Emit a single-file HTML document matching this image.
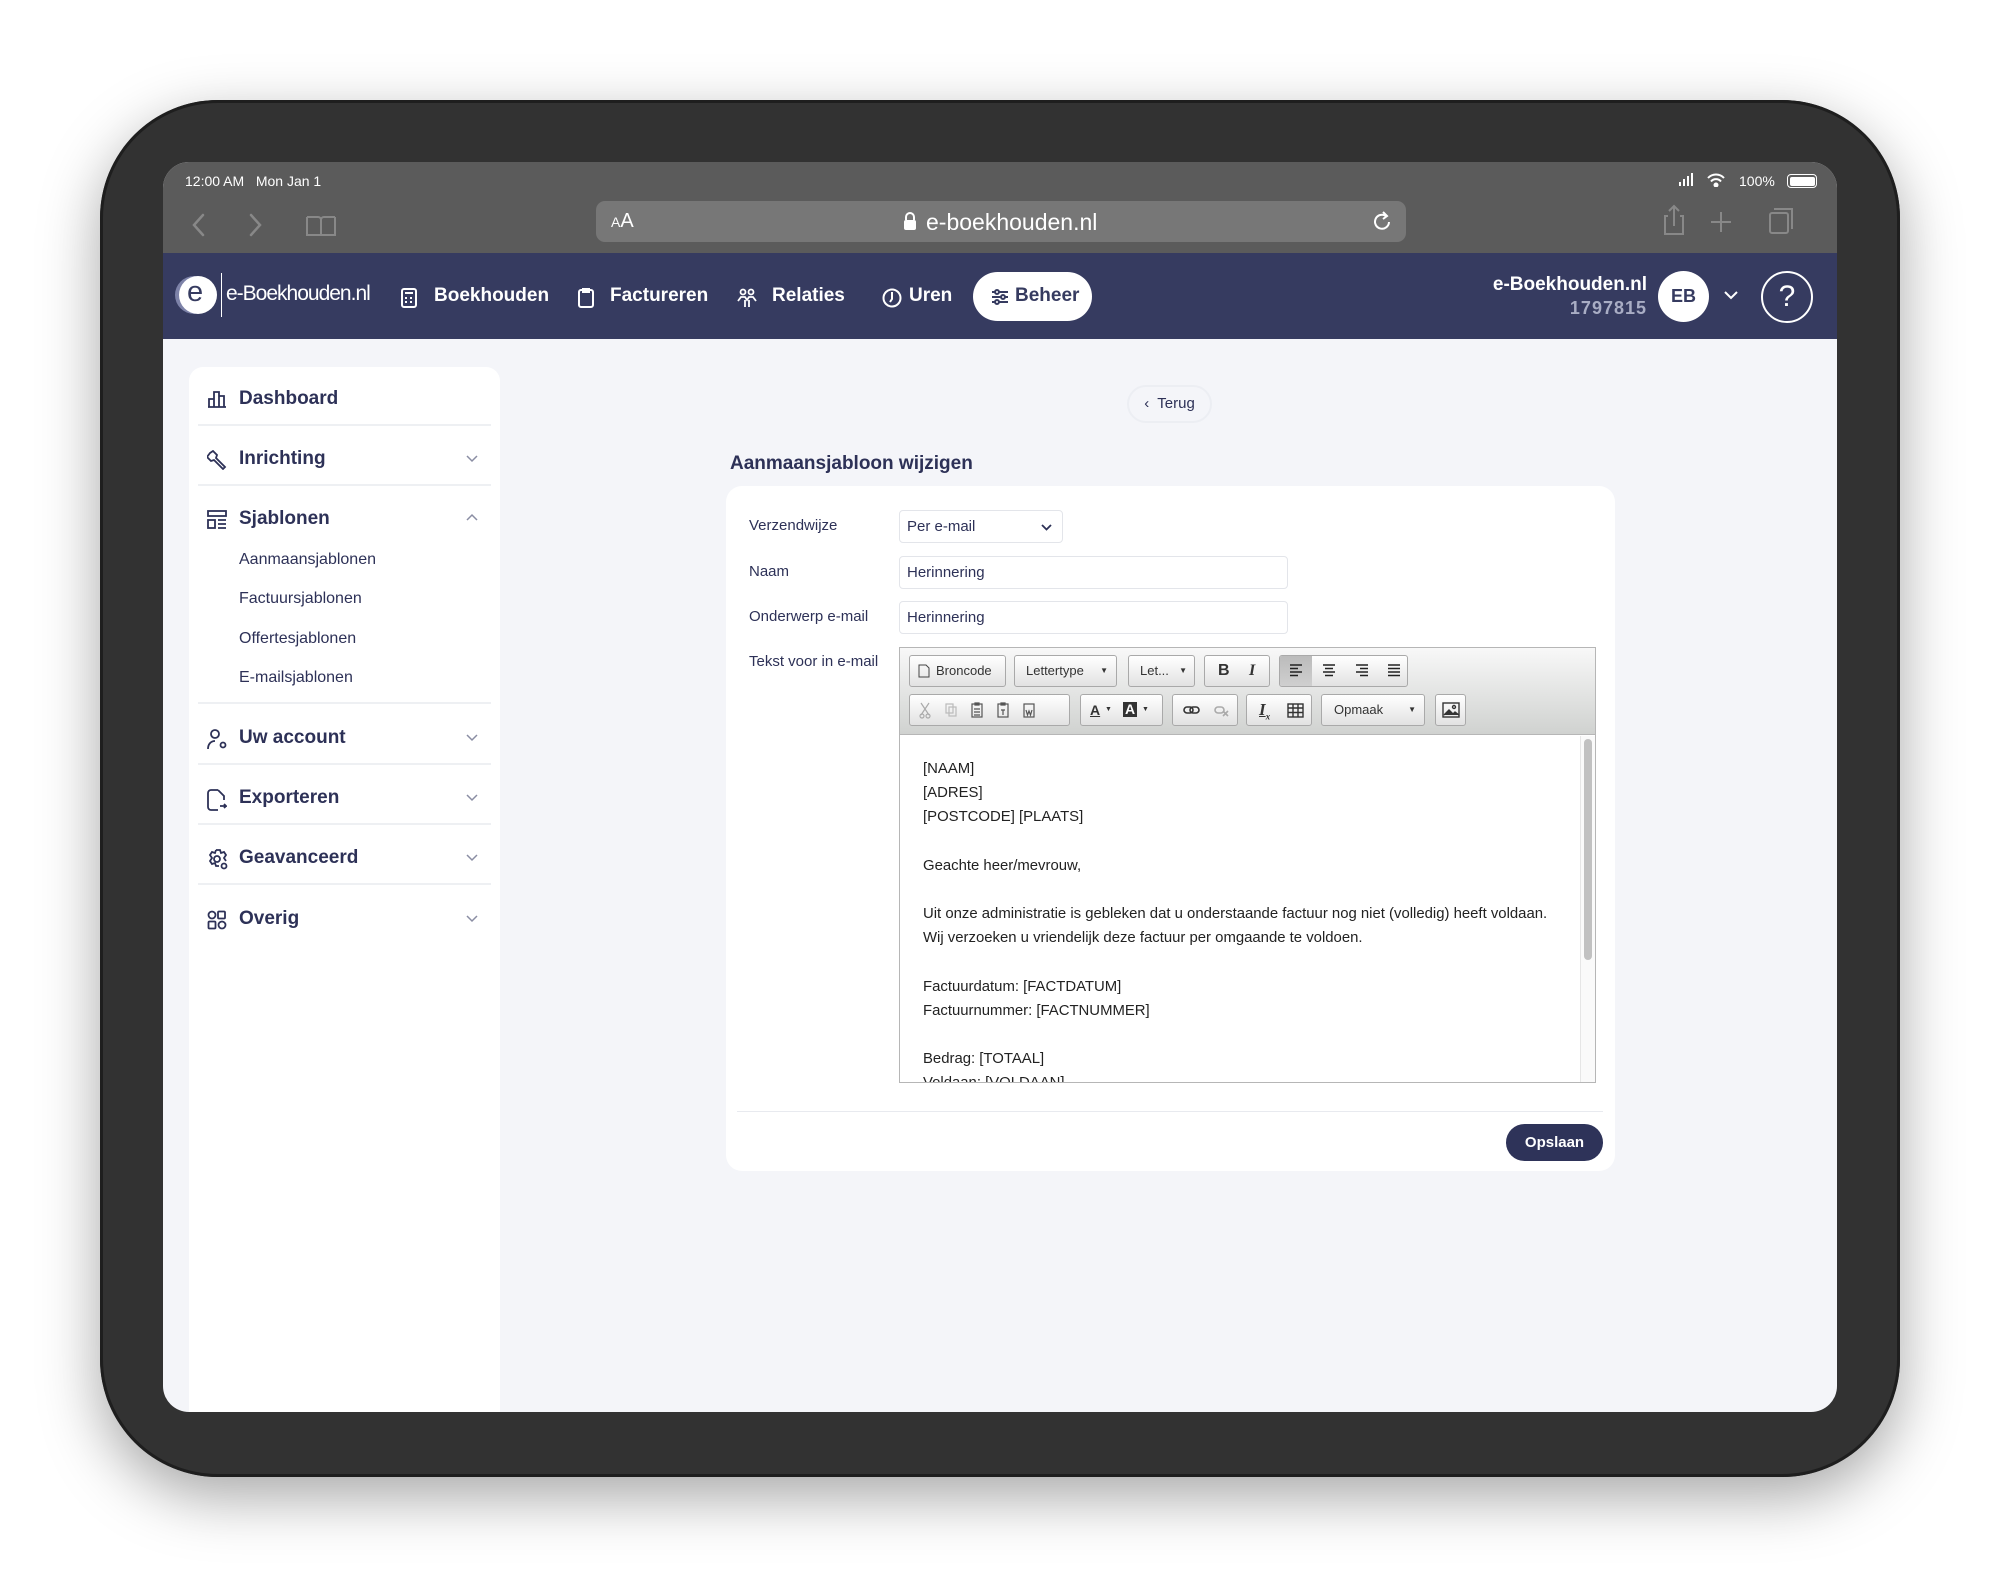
<!DOCTYPE html>
<html><head><meta charset="utf-8">
<style>
*{box-sizing:border-box;margin:0;padding:0}
body{width:2000px;height:1576px;background:#fff;position:relative;overflow:hidden;font-family:"Liberation Sans",sans-serif}
.abs{position:absolute}
#device{left:100px;top:100px;width:1800px;height:1377px;border-radius:118px;background:#323232;box-shadow:0 20px 60px rgba(0,0,0,.35),inset 0 0 0 3px #1e1e1e}
#screen{left:163px;top:162px;width:1674px;height:1250px;border-radius:26px;overflow:hidden;background:#f4f5f9}
#status{left:0;top:0;width:1674px;height:91px;background:#5b5b5b}
.st{color:#fff;font-size:14px}
#url{left:433px;top:39px;width:810px;height:41px;border-radius:9px;background:#777}
#nav{left:0;top:91px;width:1674px;height:86px;background:#363b60}
.nv{color:#fff;font-weight:bold;font-size:19px;top:32px}
#side{left:26px;top:205px;width:311px;height:1100px;background:#fff;border-radius:14px}
.si{left:50px;font-weight:bold;font-size:19px;color:#2d3157}
.sub{left:50px;font-size:16px;color:#2d3157}
.sep{left:9px;width:293px;height:2px;background:#eef0f3}
.ic{left:18px}
.chev{left:277px}
.lbl{font-size:15px;color:#2d3157;left:23px}
.inp{background:#fff;border:1px solid #e3e5ea;border-radius:4px;font-size:15px;color:#2d3157;padding-left:7px;line-height:31px}
.tb{position:absolute;height:32px;border:1px solid #a9a9a9;border-radius:3px;background:linear-gradient(#fff,#e2e2e2);font-size:13px;color:#333;line-height:30px}
.body p{font-size:14.9px;color:#222;height:24.2px;line-height:24.2px;white-space:nowrap}
</style></head><body>
<div id="device" class="abs"></div>
<div id="screen" class="abs">
  <div id="status" class="abs">
    <div class="abs st" style="left:22px;top:11px">12:00 AM&nbsp;&nbsp;&nbsp;Mon Jan 1</div>
    <svg class="abs" style="left:1515px;top:11px" width="16" height="14"><rect x="1" y="9" width="2" height="4" fill="#fff"/><rect x="5" y="6" width="2" height="7" fill="#fff"/><rect x="9" y="3" width="2" height="10" fill="#fff"/><rect x="13" y="0" width="2" height="13" fill="#fff"/></svg>
    <svg class="abs" style="left:1543px;top:11px" width="20" height="14" fill="none" stroke="#fff" stroke-width="2"><path d="M2 5a11 11 0 0 1 16 0M5 8.5a6.5 6.5 0 0 1 10 0"/><circle cx="10" cy="12" r="1.5" fill="#fff"/></svg>
    <div class="abs st" style="left:1576px;top:11px">100%</div>
    <div class="abs" style="left:1624px;top:12px;width:30px;height:14px;border:1.5px solid #fff;border-radius:4px;padding:1.5px"><div style="width:100%;height:100%;background:#fff;border-radius:2px"></div></div>
    <svg class="abs" style="left:20px;top:50px" width="120" height="26" fill="none" stroke="#888" stroke-width="2.5" stroke-linecap="round"><path d="M20 3l-9 10 9 10M68 3l9 10-9 10"/></svg>
    <svg class="abs" style="left:142px;top:52px" width="32" height="24" fill="none" stroke="#888" stroke-width="2"><path d="M2 3h11a3 3 0 0 1 3 3v16M30 3H19a3 3 0 0 0-3 3M2 3v18h14M30 3v18H16"/></svg>
    <div id="url" class="abs">
      <div class="abs" style="left:15px;top:9px;color:#fff;font-size:20px"><span style="font-size:14px">A</span>A</div>
      <svg class="abs" style="left:307px;top:10px" width="14" height="20"><path d="M3 9V6a4 4 0 0 1 8 0v3" fill="none" stroke="#fff" stroke-width="2"/><rect x="1" y="9" width="12" height="10" rx="2" fill="#fff"/></svg>
      <div class="abs" style="left:330px;top:8px;color:#fff;font-size:23px">e-boekhouden.nl</div>
      <svg class="abs" style="left:775px;top:9px" width="22" height="24" fill="none" stroke="#fff" stroke-width="2"><path d="M18 12a7 7 0 1 1-3-6"/><path d="M12 2l4 4-4 3"/></svg>
    </div>
    <svg class="abs" style="left:1500px;top:40px" width="160" height="36" fill="none" stroke="#888" stroke-width="2"><path d="M5 14H2v18h18V14h-3M11 24V4M6 9l5-5 5 5M58 10v20M48 20h20"/><rect x="107" y="11" width="18" height="20" rx="2"/><path d="M111 7h18v20"/></svg>
  </div>
  <div id="nav" class="abs">
    <div class="abs" style="left:16px;top:23px;width:38px;height:38px;border-radius:50%;background:#fff;box-shadow:-4px 0 0 #7d82a8"></div>
    <div class="abs" style="left:24px;top:23px;font-size:29px;color:#363b60">e</div>
    <div class="abs" style="left:58px;top:20px;width:1px;height:44px;background:#fff"></div>
    <div class="abs" style="left:63px;top:29px;color:#fff;font-size:21px;letter-spacing:-1px">e-Boekhouden.nl</div>
    <svg class="abs" style="left:238px;top:35px" width="16" height="20" fill="none" stroke="#fff" stroke-width="2"><rect x="1" y="1" width="14" height="18" rx="2"/><path d="M4 5h8M4 10h2M9 10h2M4 14h2M9 14h2"/></svg>
    <div class="abs nv" style="left:271px">Boekhouden</div>
    <svg class="abs" style="left:415px;top:34px" width="16" height="21" fill="none" stroke="#fff" stroke-width="2"><rect x="1" y="3" width="14" height="17" rx="2"/><path d="M5 2h6v3H5z"/></svg>
    <div class="abs nv" style="left:447px">Factureren</div>
    <svg class="abs" style="left:574px;top:35px" width="20" height="20" fill="none" stroke="#fff" stroke-width="1.8"><circle cx="6" cy="4" r="2.5"/><circle cx="14" cy="4" r="2.5"/><path d="M1 13l3-4h4l2 3 2-3h4l3 4M8 12v7M12 12v7"/></svg>
    <div class="abs nv" style="left:609px">Relaties</div>
    <svg class="abs" style="left:719px;top:35px" width="20" height="20" fill="none" stroke="#fff" stroke-width="2"><circle cx="10" cy="10" r="8.5"/><path d="M10 4v7l-2 3"/></svg>
    <div class="abs nv" style="left:746px">Uren</div>
    <div class="abs" style="left:810px;top:19px;width:119px;height:49px;border-radius:25px;background:#fff"></div>
    <svg class="abs" style="left:828px;top:35px" width="18" height="18" fill="none" stroke="#363b60" stroke-width="2"><path d="M1 4h16M1 9h16M1 14h16"/><circle cx="6" cy="4" r="2" fill="#fff"/><circle cx="12" cy="9" r="2" fill="#fff"/><circle cx="6" cy="14" r="2" fill="#fff"/></svg>
    <div class="abs nv" style="left:852px;color:#363b60">Beheer</div>
    <div class="abs" style="right:190px;top:21px;color:#fff;font-weight:bold;font-size:19px;text-align:right">e-Boekhouden.nl</div>
    <div class="abs" style="right:190px;top:45px;color:#a9adc4;font-weight:bold;font-size:18px;letter-spacing:1px">1797815</div>
    <div class="abs" style="left:1495px;top:18px;width:51px;height:51px;border-radius:50%;background:#fff;color:#363b60;font-weight:bold;font-size:18px;text-align:center;line-height:51px">EB</div>
    <svg class="abs" style="left:1561px;top:37px" width="14" height="10" fill="none" stroke="#fff" stroke-width="2"><path d="M1 2l6 6 6-6"/></svg>
    <div class="abs" style="left:1598px;top:18px;width:52px;height:52px;border-radius:50%;border:2px solid #fff;color:#fff;font-size:30px;text-align:center;line-height:48px">?</div>
  </div>
  <div id="side" class="abs">
    <svg class="abs ic" style="top:23px" width="20" height="18" fill="none" stroke="#2d3157" stroke-width="1.8"><path d="M1 17h18M2 17V9h5v8M7 17V2h5v15M12 17V6h5v11"/></svg>
    <div class="abs si" style="top:21px">Dashboard</div>
    <div class="abs sep" style="top:57px"></div>
    <svg class="abs ic" style="top:83px" width="20" height="20" fill="none" stroke="#2d3157" stroke-width="1.8"><path d="M3 3l3-2 4 4-1 3 9 9-2 2-9-9-3 1-4-4z"/></svg>
    <div class="abs si" style="top:81px">Inrichting</div>
    <svg class="abs chev" style="top:88px" width="12" height="8" fill="none" stroke="#8a8da3" stroke-width="1.5"><path d="M1 1l5 5 5-5"/></svg>
    <div class="abs sep" style="top:117px"></div>
    <svg class="abs ic" style="top:143px" width="20" height="20" fill="none" stroke="#2d3157" stroke-width="1.8"><rect x="1" y="1" width="18" height="5"/><rect x="1" y="10" width="7" height="8"/><path d="M11 10h8M11 14h8M11 18h8"/></svg>
    <div class="abs si" style="top:141px">Sjablonen</div>
    <svg class="abs chev" style="top:146px" width="12" height="8" fill="none" stroke="#8a8da3" stroke-width="1.5"><path d="M1 7l5-5 5 5"/></svg>
    <div class="abs sub" style="top:184px">Aanmaansjablonen</div>
    <div class="abs sub" style="top:223px">Factuursjablonen</div>
    <div class="abs sub" style="top:263px">Offertesjablonen</div>
    <div class="abs sub" style="top:302px">E-mailsjablonen</div>
    <div class="abs sep" style="top:335px"></div>
    <svg class="abs ic" style="top:362px" width="22" height="22" fill="none" stroke="#2d3157" stroke-width="1.8"><circle cx="8" cy="5" r="4"/><path d="M1 20c0-5 3-8 7-8"/><circle cx="16" cy="16" r="2.5"/></svg>
    <div class="abs si" style="top:360px">Uw account</div>
    <svg class="abs chev" style="top:367px" width="12" height="8" fill="none" stroke="#8a8da3" stroke-width="1.5"><path d="M1 1l5 5 5-5"/></svg>
    <div class="abs sep" style="top:396px"></div>
    <svg class="abs ic" style="top:422px" width="20" height="22" fill="none" stroke="#2d3157" stroke-width="1.8"><path d="M11 1H4a3 3 0 0 0-3 3v14a3 3 0 0 0 3 3h7M11 1l6 6v4M13 17h6l-2-2M19 17l-2 2"/></svg>
    <div class="abs si" style="top:420px">Exporteren</div>
    <svg class="abs chev" style="top:427px" width="12" height="8" fill="none" stroke="#8a8da3" stroke-width="1.5"><path d="M1 1l5 5 5-5"/></svg>
    <div class="abs sep" style="top:456px"></div>
    <svg class="abs ic" style="top:482px" width="22" height="22" fill="none" stroke="#2d3157" stroke-width="1.8"><path d="M9 1h4l1 3 3-1 2 3-2 3 2 3M9 1L8 4 5 3 3 6l2 3-2 3 2 3 3-1 1 3h3"/><circle cx="10" cy="10" r="3"/><circle cx="17" cy="17" r="2.5"/></svg>
    <div class="abs si" style="top:480px">Geavanceerd</div>
    <svg class="abs chev" style="top:487px" width="12" height="8" fill="none" stroke="#8a8da3" stroke-width="1.5"><path d="M1 1l5 5 5-5"/></svg>
    <div class="abs sep" style="top:516px"></div>
    <svg class="abs ic" style="top:543px" width="20" height="20" fill="none" stroke="#2d3157" stroke-width="1.8"><circle cx="5" cy="5" r="3.5"/><rect x="11" y="1.5" width="7" height="7" rx="1"/><rect x="1.5" y="11.5" width="7" height="7" rx="1"/><circle cx="15" cy="15" r="3.5"/></svg>
    <div class="abs si" style="top:541px">Overig</div>
    <svg class="abs chev" style="top:548px" width="12" height="8" fill="none" stroke="#8a8da3" stroke-width="1.5"><path d="M1 1l5 5 5-5"/></svg>
  </div>
  <div class="abs" style="left:964px;top:223px;width:85px;height:38px;border-radius:19px;border:2px solid #eceef3;color:#2d3157;font-size:15px;line-height:34px;text-align:center">‹&nbsp; Terug</div>
  <div class="abs" style="left:567px;top:291px;color:#2d3157;font-weight:bold;font-size:19px">Aanmaansjabloon wijzigen</div>
  <div class="abs" style="left:563px;top:324px;width:889px;height:685px;background:#fff;border-radius:16px">
    <div class="abs lbl" style="top:31px">Verzendwijze</div>
    <div class="abs lbl" style="top:77px">Naam</div>
    <div class="abs lbl" style="top:122px">Onderwerp e-mail</div>
    <div class="abs lbl" style="top:167px">Tekst voor in e-mail</div>
    <div class="abs inp" style="left:173px;top:24px;width:164px;height:33px">Per e-mail<svg style="position:absolute;right:10px;top:13px" width="11" height="8" fill="none" stroke="#2d3157" stroke-width="1.8"><path d="M1 1l4.5 4.5L10 1"/></svg></div>
    <div class="abs inp" style="left:173px;top:70px;width:389px;height:33px">Herinnering</div>
    <div class="abs inp" style="left:173px;top:115px;width:389px;height:33px">Herinnering</div>
    <div class="abs" style="left:173px;top:161px;width:697px;height:436px;border:1px solid #b6b6b6;background:#fff">
      <div class="abs" style="left:0;top:0;width:695px;height:87px;background:linear-gradient(#f8f8f8,#d0d2d0);border-bottom:1px solid #b6b6b6"></div>
      <div class="tb" style="left:9px;top:7px;width:97px;padding-left:26px">Broncode<svg style="position:absolute;left:8px;top:8px" width="12" height="14" fill="none" stroke="#444"><path d="M1 1h7l3 3v9H1z"/></svg></div>
      <div class="tb" style="left:114px;top:7px;width:103px;padding-left:11px">Lettertype<span style="position:absolute;right:8px;font-size:8px">▼</span></div>
      <div class="tb" style="left:228px;top:7px;width:67px;padding-left:11px">Let...<span style="position:absolute;right:7px;font-size:8px">▼</span></div>
      <div class="tb" style="left:304px;top:7px;width:66px;font-size:16px"><b style="position:absolute;left:13px">B</b><i style="position:absolute;left:44px;font-family:'Liberation Serif';font-weight:bold">I</i></div>
      <div class="tb" style="left:379px;top:7px;width:129px;overflow:hidden"><div style="position:absolute;left:0;top:0;width:32px;height:30px;background:linear-gradient(#bbb,#cfcfcf)"></div>
        <svg style="position:absolute;left:9px;top:8px" width="115" height="14" stroke="#222" stroke-width="1.5"><path d="M1 1h12M1 4.5h8M1 8h12M1 11.5h8M34 1h12M36 4.5h8M34 8h12M36 11.5h8M67 1h12M71 4.5h8M67 8h12M71 11.5h8M99 1h12M99 4.5h12M99 8h12M99 11.5h12"/></svg></div>
      <div class="tb" style="left:9px;top:46px;width:161px"><svg style="position:absolute;left:8px;top:6px" width="140" height="18" fill="none" stroke="#555" stroke-width="1.2"><path d="M3 2l8 12M11 2L3 14" stroke="#aaa"/><circle cx="4" cy="15" r="2" stroke="#aaa"/><circle cx="10" cy="15" r="2" stroke="#aaa"/><rect x="28" y="3" width="7" height="9" stroke="#bbb"/><rect x="31" y="6" width="7" height="9" stroke="#bbb"/><rect x="54" y="3" width="10" height="13"/><path d="M57 2h4v2h-4zM56 8h6M56 11h6M56 14h6"/><rect x="80" y="3" width="10" height="13"/><path d="M83 2h4v2h-4zM83 9h4M85 9v5"/><rect x="106" y="3" width="10" height="13"/><path d="M108 9l1.5 5 1.5-4 1.5 4 1.5-5"/></svg></div>
      <div class="tb" style="left:180px;top:46px;width:83px;font-weight:bold;font-size:14px"><span style="position:absolute;left:9px;text-decoration:underline">A</span><span style="position:absolute;left:24px;font-size:7px">▼</span><span style="position:absolute;left:42px;background:#333;color:#fff;padding:0 2px;line-height:15px;top:7px">A</span><span style="position:absolute;left:61px;font-size:7px">▼</span></div>
      <div class="tb" style="left:272px;top:46px;width:66px"><svg style="position:absolute;left:10px;top:9px" width="50" height="14" fill="none" stroke-width="1.6"><rect x="1" y="3" width="9" height="6" rx="3" stroke="#333"/><rect x="7" y="3" width="9" height="6" rx="3" stroke="#333"/><rect x="32" y="3" width="9" height="6" rx="3" stroke="#aaa"/><path d="M40 7l5 5M45 7l-5 5" stroke="#aaa"/></svg></div>
      <div class="tb" style="left:346px;top:46px;width:66px"><span style="position:absolute;left:12px;font-family:'Liberation Serif';font-style:italic;font-weight:bold;font-size:17px;text-decoration:underline">I<sub style="font-size:9px">x</sub></span><svg style="position:absolute;left:40px;top:8px" width="17" height="15" fill="none" stroke="#333" stroke-width="1.4"><rect x="1" y="1" width="15" height="13"/><path d="M1 5h15M1 9.5h15M6 1v13M11 1v13"/></svg></div>
      <div class="tb" style="left:421px;top:46px;width:104px;padding-left:12px">Opmaak<span style="position:absolute;right:8px;font-size:8px">▼</span></div>
      <div class="tb" style="left:535px;top:46px;width:31px"><svg style="position:absolute;left:6px;top:7px" width="18" height="16" fill="none" stroke="#333" stroke-width="1.4"><rect x="1" y="1" width="16" height="14"/><path d="M2 13l5-5 4 4 2-2 4 3" fill="#333"/><circle cx="12" cy="5" r="1.5"/></svg></div>
      <div class="abs" style="left:0;top:88px;width:680px;height:346px;overflow:hidden">
      <div class="abs body" style="left:23px;top:21px">
        <p>[NAAM]</p><p>[ADRES]</p><p>[POSTCODE] [PLAATS]</p><p></p><p>Geachte heer/mevrouw,</p><p></p>
        <p>Uit onze administratie is gebleken dat u onderstaande factuur nog niet (volledig) heeft voldaan.</p>
        <p>Wij verzoeken u vriendelijk deze factuur per omgaande te voldoen.</p><p></p>
        <p>Factuurdatum: [FACTDATUM]</p><p>Factuurnummer: [FACTNUMMER]</p><p></p><p>Bedrag: [TOTAAL]</p><p>Voldaan: [VOLDAAN]</p>
      </div></div>
      <div class="abs" style="left:680px;top:88px;width:15px;height:346px;background:#fafafa;border-left:1px solid #e6e6e6"></div>
      <div class="abs" style="left:684px;top:91px;width:8px;height:221px;background:#c1c1c1;border-radius:4px"></div>
    </div>
    <div class="abs" style="left:11px;top:625px;width:866px;height:1px;background:#e8eaef"></div>
    <div class="abs" style="left:780px;top:638px;width:97px;height:37px;border-radius:19px;background:#2e3359;color:#fff;font-weight:bold;font-size:15px;text-align:center;line-height:37px">Opslaan</div>
  </div>
</div>
</body></html>
